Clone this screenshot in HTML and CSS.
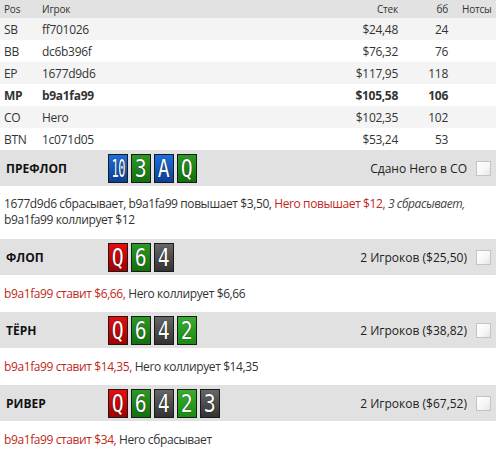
FILE: index.html
```html
<!DOCTYPE html>
<html>
<head>
<meta charset="utf-8">
<link rel="stylesheet" href="styles.css">
</head>
<body>
<div class="players">
  <div class="prow head"><span>Pos</span><span>Игрок</span><span class="r">Стек</span><span class="r">бб</span><span class="notes">Нотсы</span></div>
  <div class="prow alt"><span>SB</span><span>ff701026</span><span class="r">$24,48</span><span class="r">24</span><span></span></div>
  <div class="prow"><span>BB</span><span>dc6b396f</span><span class="r">$76,32</span><span class="r">76</span><span></span></div>
  <div class="prow alt"><span>EP</span><span>1677d9d6</span><span class="r">$117,95</span><span class="r">118</span><span></span></div>
  <div class="prow bold"><span>MP</span><span>b9a1fa99</span><span class="r">$105,58</span><span class="r">106</span><span></span></div>
  <div class="prow alt"><span>CO</span><span>Hero</span><span class="r">$102,35</span><span class="r">102</span><span></span></div>
  <div class="prow"><span>BTN</span><span>1c071d05</span><span class="r">$53,24</span><span class="r">53</span><span></span></div>
</div>

<div class="street">
  <div class="label">ПРЕФЛОП</div>
  <div class="cards"><span class="card d"><span class="rk ten">10</span></span><span class="card c"><span class="rk">3</span></span><span class="card d"><span class="rk">A</span></span><span class="card c"><span class="rk">Q</span></span></div>
  <div class="info">Сдано Hero в CO</div>
  <div class="note"></div>
</div>
<div class="actions two">1677d9d6 сбрасывает, b9a1fa99 повышает $3,50, <span class="red">Hero повышает $12,</span> <i>3 сбрасывает,</i> b9a1fa99 коллирует $12</div>

<div class="street">
  <div class="label">ФЛОП</div>
  <div class="cards"><span class="card h"><span class="rk">Q</span></span><span class="card c"><span class="rk">6</span></span><span class="card s"><span class="rk">4</span></span></div>
  <div class="info">2 Игроков ($25,50)</div>
  <div class="note"></div>
</div>
<div class="actions"><span class="red">b9a1fa99 ставит $6,66,</span> Hero коллирует $6,66</div>

<div class="street">
  <div class="label">ТЁРН</div>
  <div class="cards"><span class="card h"><span class="rk">Q</span></span><span class="card c"><span class="rk">6</span></span><span class="card s"><span class="rk">4</span></span><span class="card c2"><span class="rk">2</span></span></div>
  <div class="info">2 Игроков ($38,82)</div>
  <div class="note"></div>
</div>
<div class="actions"><span class="red">b9a1fa99 ставит $14,35,</span> Hero коллирует $14,35</div>

<div class="street">
  <div class="label">РИВЕР</div>
  <div class="cards"><span class="card h"><span class="rk">Q</span></span><span class="card c"><span class="rk">6</span></span><span class="card s"><span class="rk">4</span></span><span class="card c2"><span class="rk">2</span></span><span class="card s"><span class="rk">3</span></span></div>
  <div class="info">2 Игроков ($67,52)</div>
  <div class="note"></div>
</div>
<div class="actions"><span class="red">b9a1fa99 ставит $34,</span> Hero сбрасывает</div>
</body>
</html>
```

FILE: styles.css
```css
html, body {
  margin: 0;
  padding: 0;
  background: #fff;
}
body {
  font-family: "Open Sans", "Noto Sans", sans-serif;
  font-size: 12px;
  color: #333;
  width: 496px;
  overflow: hidden;
}
.prow {
  display: grid;
  grid-template-columns: 38px 1fr 70px 50px 48px;
  padding-left: 4px;
  height: 22px;
  align-items: center;
  letter-spacing: -0.3px;
}
.prow.head {
  height: 18px;
  background: #e2e2e2;
  font-size: 10px;
  letter-spacing: -0.2px;
}
.prow.alt { background: #f4f4f4; }
.prow.bold { font-weight: bold; }
.prow .r { text-align: right; }
.prow .notes { padding-left: 14px; }

.street {
  display: flex;
  align-items: center;
  height: 36px;
  background: #e1e1e1;
  padding-right: 5px;
}
.label {
  width: 102px;
  padding-left: 6px;
  font-weight: bold;
  color: #111;
  font-size: 12px;
}
.cards {
  display: flex;
  gap: 3px;
}
.card {
  display: flex;
  justify-content: center;
  align-items: center;
  width: 18px;
  height: 27px;
  border: 1px solid #1a1a1a;
  color: #fff;
  font-family: "DejaVu Sans Mono", monospace;
  font-size: 22px;
  line-height: 27px;
  text-shadow: 0 0 1px #000;
  overflow: hidden;
}
.rk {
  display: inline-block;
  transform: scale(0.9, 1.15);
  white-space: nowrap;
}
.rk.ten {
  letter-spacing: -1px;
  transform: scale(0.55, 1.15);
}
.card.d { background: linear-gradient(#1c6fe0, #0a3f96); }
.card.c { background: linear-gradient(#2a9a22, #12700e); }
.card.c2 { background: linear-gradient(#36b02c, #1a8a14); }
.card.h { background: linear-gradient(#e80c0c, #a00000); }
.card.s { background: linear-gradient(#666, #333); }
.info {
  margin-left: auto;
  color: #222;
}
.note {
  width: 13px;
  height: 13px;
  margin-left: 9px;
  border: 1px solid #c4c4c4;
  background: linear-gradient(135deg, #fff 0%, #f6f6f6 60%, #e4e4e4 100%);
}
.actions {
  padding: 10px 4px;
  line-height: 17px;
  letter-spacing: -0.4px;
}
.actions.two { line-height: 16px; padding-bottom: 11px; }
.red { color: #c0281c; }
i { color: #444; }
```
